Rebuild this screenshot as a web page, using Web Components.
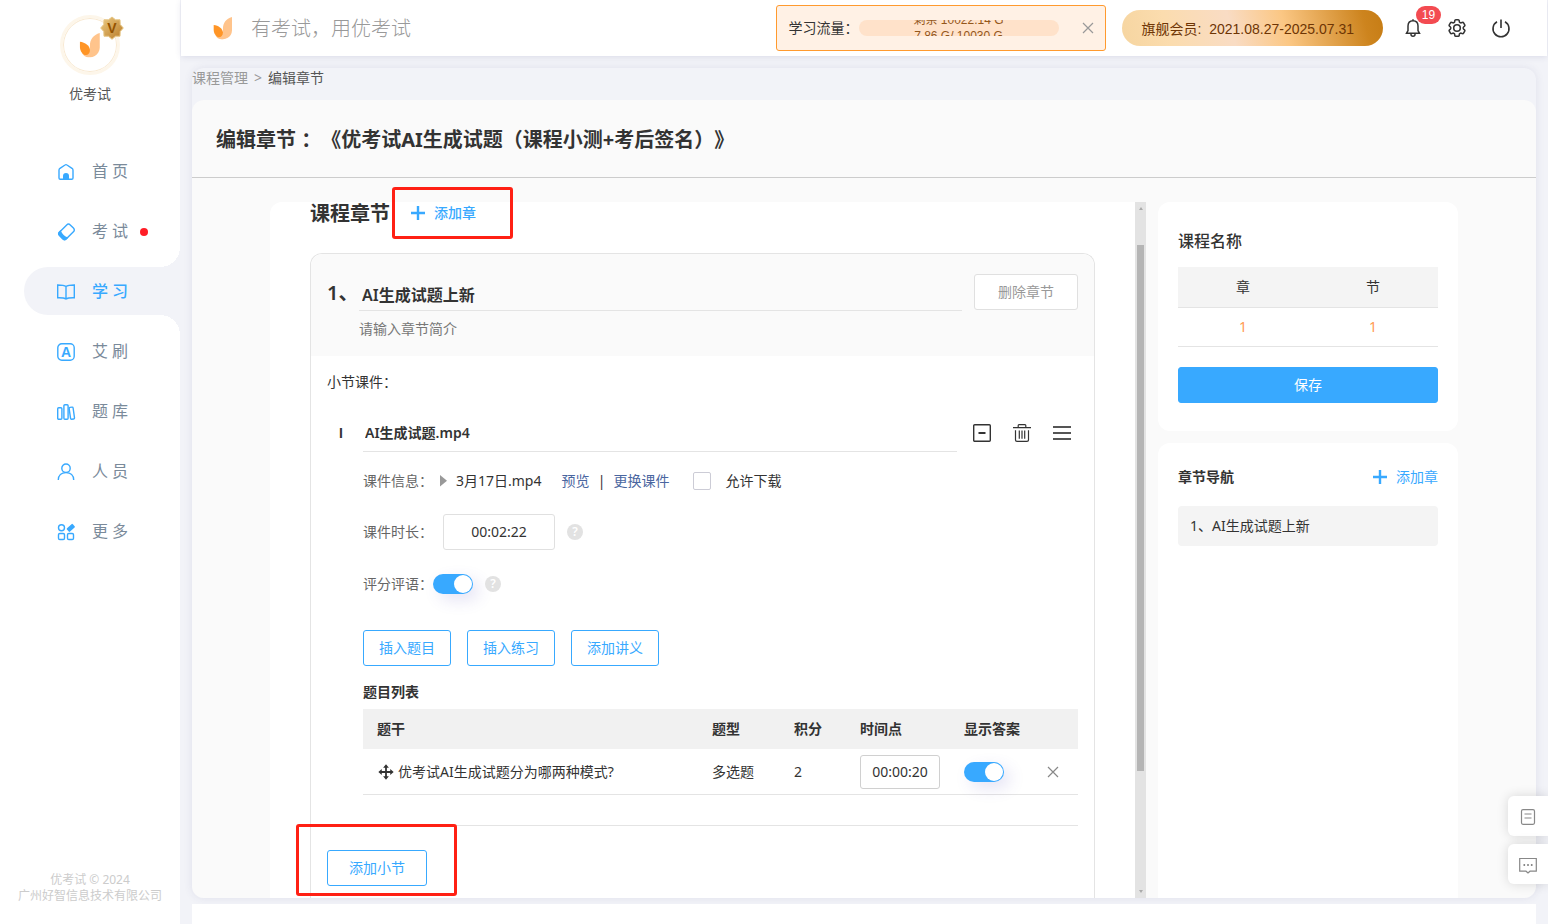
<!DOCTYPE html>
<html lang="zh-CN">
<head>
<meta charset="utf-8">
<meta name="viewport" content="width=device-width, initial-scale=1">
<title>优考试 - 编辑章节</title>
<style>
  :root {
    --blue: #38a9ff;
    --ink: #333;
    --muted: #666;
    --faint: #999;
    --line: #e4e4e4;
    --page: #f2f3f8;
    --panel: #fafafa;
    --sans: "Noto Sans", "Noto Sans CJK SC", sans-serif;
    --arial: "Liberation Sans", "Noto Sans CJK SC", sans-serif;
  }
  body {
    margin: 0;
    background: var(--page);
    color: var(--ink);
    font: 14px/20px var(--sans);
    text-spacing-trim: space-all;
  }
</style>
</head>
<body>
<app-shell>
  <side-bar slot="side"></side-bar>
  <top-bar slot="top"></top-bar>
  <course-page></course-page>
</app-shell>
<float-dock></float-dock>

<script>
const base = `:host, *, *::before, *::after { box-sizing: border-box; } :host([hidden]) { display: none; }
  button, input { font: inherit; color: inherit; margin: 0; } button { cursor: pointer; }
  svg { display: block; }`;

function define(name, css, html) {
  const template = document.createElement('template');
  template.innerHTML = `<style>${base}${css}</style>${html}`;
  customElements.define(name, class extends HTMLElement {
    constructor() {
      super();
      this.attachShadow({ mode: 'open' }).append(template.content.cloneNode(true));
    }
  });
}

/* ---------- icons ---------- */
const icons = {
  home: `<path d="M3 8.3Q3 7 4 6.3L9 3Q10 2.3 11 3L16 6.3Q17 7 17 8.3V16Q17 17.3 15.7 17.3H4.3Q3 17.3 3 16Z"/><path fill="currentColor" stroke="none" d="M7 17.5V14a3 3 0 0 1 6 0v3.500Z"/>`,
  exam: `<g transform="rotate(45 10 10)"><rect x="5.500" y="2" width="9.500" height="15" rx="2.500"/><path fill="currentColor" d="M5.500 13.500Q10 15.500 15 13.500V15q0 2-2.500 2H8q-2.500 0-2.500-2Z"/></g>`,
  book: `<path d="M10 4.500C8 3 5 3 1.700 3V15.700C5 15.700 8 15.500 10 17 12 15.500 15 15.700 18.300 15.700V3C15 3 12 3 10 4.500ZM10 4.500V17"/>`,
  shelf: `<rect x="1.700" y="5.700" width="4.200" height="11.500" rx="1"/><rect x="7.900" y="2.700" width="4.200" height="14.500" rx="1"/><rect x="13.800" y="5.200" width="4" height="12" rx="1" transform="rotate(-8 16 11)"/>`,
  person: `<circle cx="10" cy="6.200" r="4.200"/><path d="M2.300 18C2.300 13.500 5.500 10.600 10 10.600S17.700 13.500 17.700 18"/>`,
  more: `<circle cx="5.500" cy="5.800" r="3"/><rect x="2.500" y="11.500" width="6" height="6" rx="1.300"/><rect x="11.500" y="11.500" width="6" height="6" rx="1.300"/><rect fill="currentColor" stroke="none" x="10.800" y="3.600" width="8" height="4.600" rx="1" transform="rotate(-42 14.800 5.900)"/>`,
  ai: `<rect x="1.800" y="1.800" width="16.400" height="16.400" rx="4"/><text x="10" y="15" text-anchor="middle" font-family="Liberation Sans" font-weight="700" font-size="14" fill="currentColor" stroke="none">A</text>`,
  bell: `<path d="M10 2.700C6.800 2.700 5 5 5 8V12.500L3.500 15.300H16.500L15 12.500V8C15 5 13.200 2.700 10 2.700ZM10 2.700V1.200M8 16v.6a2 1.700 0 0 0 4 0V16"/>`,
  gear: `<g transform="translate(-1 -1) scale(.917)"><path d="M9.594 3.940c.09-.542.56-.94 1.110-.94h2.593c.55 0 1.020.398 1.110.94l.213 1.281c.063.374.313.686.645.87.074.04.147.083.22.127.325.196.72.257 1.075.124l1.217-.456a1.125 1.125 0 0 1 1.370.49l1.296 2.247a1.125 1.125 0 0 1-.26 1.431l-1.003.827c-.293.241-.438.613-.43.992a7.723 7.723 0 0 1 0 .255c-.008.378.137.75.43.991l1.004.827c.424.35.534.955.26 1.430l-1.298 2.247a1.125 1.125 0 0 1-1.369.491l-1.217-.456c-.355-.133-.75-.072-1.076.124a6.470 6.470 0 0 1-.22.128c-.331.183-.581.495-.644.869l-.213 1.281c-.09.543-.56.94-1.110.94h-2.594c-.55 0-1.019-.398-1.110-.94l-.213-1.281c-.062-.374-.312-.686-.644-.87a6.520 6.520 0 0 1-.22-.127c-.325-.196-.72-.257-1.076-.124l-1.217.456a1.125 1.125 0 0 1-1.369-.49l-1.297-2.247a1.125 1.125 0 0 1 .26-1.431l1.004-.827c.292-.24.437-.613.43-.991a6.932 6.932 0 0 1 0-.255c.007-.38-.138-.751-.43-.992l-1.004-.827a1.125 1.125 0 0 1-.26-1.430l1.297-2.247a1.125 1.125 0 0 1 1.370-.491l1.216.456c.356.133.751.072 1.076-.124.072-.044.146-.086.22-.128.332-.183.582-.495.644-.869l.214-1.280Z"/><circle cx="12" cy="12" r="3.600"/></g>`,
  power: `<path d="M6 3.800A8 8 0 1 0 14 3.800M10 1.500V10"/>`,
  close: `<path d="M5 5 15 15M15 5 5 15"/>`,
  plus: `<path stroke-width="2.400" d="M3 10H17M10 3V17"/>`,
  collapse: `<rect x="1.700" y="1.700" width="16.600" height="16.600" rx="1"/><path stroke-width="2" d="M6.500 10H13.500"/>`,
  trash: `<path d="M1 4.700H19M6.200 4.500V2.600Q6.200 1.700 7 1.700H13Q13.800 1.700 13.800 2.600V4.500M3.500 7.200V17Q3.500 18.400 5 18.400H15Q16.500 18.400 16.500 17V7.200M7.300 7.500V15.700M10 7.500V15.700M12.700 7.500V15.700"/>`,
  menu: `<path stroke="#555" stroke-width="1.800" d="M1 4H19M1 10H19M1 16H19"/>`,
  move: `<path stroke-width="2" d="M10 4V16M4 10H16"/><path fill="currentColor" stroke="none" d="M10 1.500 13.200 5.300H6.800ZM10 18.500 6.800 14.700H13.200ZM1.500 10 5.300 6.800V13.200ZM18.500 10 14.700 13.200V6.800Z"/>`,
  play: `<path fill="currentColor" stroke="none" d="M7 4 14 9.800 7 15.600Z"/>`,
  note: `<rect x="3.500" y="2.700" width="13" height="14.600" rx="1.500"/><path d="M6.500 7H13.500M6.500 11H13.500"/>`,
  chat: `<path d="M1.700 3.500H18.300V16.200H12L10 18 8 16.200H1.700Z"/><path stroke-width="1.800" d="M5.500 10h1.600M9.200 10h1.600M12.900 10h1.600"/>`,
};
customElements.define('ui-icon', class extends HTMLElement {
  constructor() { super(); this.attachShadow({ mode: 'open' }); }
  connectedCallback() {
    this.shadowRoot.innerHTML = `<style>${base}
      :host { display: block; width: 20px; height: 20px; flex: none; }
      svg { width: 100%; height: 100%; }</style>
      <svg viewBox="0 0 20 20" fill="none" stroke="currentColor" stroke-width="${this.getAttribute('weight') || 1.4}" aria-hidden="true">${icons[this.getAttribute('name')]}</svg>`;
  }
});

define('brand-mark', `:host { display: block; width: 20px; height: 24px; } svg { width: 100%; height: 100%; }`,
  `<svg viewBox="0 0 20 24" aria-hidden="true">
    <path fill="#ffc48c" d="M19 1V14.500A9 9 0 0 1 5.500 22C9.500 21 10.500 18 10 14.500 9.400 7.500 12.500 3 19 1Z"/>
    <path fill="#ffc48c" d="M2.500 19C4 23.500 9 24.500 13 22L11 15Z"/>
    <path fill="#ff9526" d="M.7 9C5.500 9.500 9.700 12.500 9.900 16.500 10 20 7.500 21.700 5 21.200 2 19.500.7 16.500.7 14Z"/>
  </svg>`);

/* ---------- shared controls ---------- */
define('ui-button', `
  :host { display: block; }
  button { display: block; width: 100%; height: 36px; padding: 0; border: 1px solid var(--blue); border-radius: 3px; background: #fff; color: var(--blue); }
  :host([tone="plain"]) button { border-color: #e0e0e0; color: var(--faint); }
  :host([tone="solid"]) button { background: var(--blue); color: #fff; }`,
  `<button type="button"><slot></slot></button>`);

define('add-link', `
  :host { display: block; }
  button { display: flex; align-items: center; gap: 6px; height: 20px; padding: 0; border: 0; background: none; color: var(--blue); line-height: 20px; }`,
  `<button type="button"><ui-icon name="plus"></ui-icon><slot></slot></button>`);

define('ui-switch', `
  :host { display: block; }
  label { display: flex; align-items: center; height: 20px; color: var(--muted); }
  input { appearance: none; display: block; width: 40px; height: 20px; padding: 1px; border-radius: 10px; background: var(--blue); box-shadow: 6px 6px 16px rgba(80, 70, 180, .15); }
  input::before { content: ""; display: block; width: 18px; height: 18px; border-radius: 9px; background: #fff; }
  input:checked::before { margin-left: 20px; }`,
  `<label><slot></slot><input type="checkbox" role="switch" aria-label="开关" checked></label>`);

define('help-dot', `
  :host { display: block; width: 16px; height: 16px; border-radius: 8px; background: #e2e2e2; color: #fff; font: 600 12px/16px var(--sans); text-align: center; }`,
  `?`);

define('marker-box', `
  :host { position: absolute; border: 3px solid #ff2014; border-radius: 3px; pointer-events: none; }`, ``);

/* ---------- sidebar ---------- */
define('nav-item', `
  :host { display: block; position: relative; }
  a { display: flex; align-items: center; gap: 16px; height: 48px; padding-left: 32px; border-radius: 24px 0 0 24px; color: #7a8a9a; font-size: 16px; line-height: 24px; text-decoration: none; }
  ::slotted(ui-icon) { margin-top: 2px; }
  span { letter-spacing: 4px; }
  i { display: none; width: 8px; height: 8px; margin: 2px 0 0 -8px; border-radius: 4px; background: #ff1d26; }
  :host([dot]) i { display: block; }
  :host([active]) a { background: var(--page); color: var(--blue); font-weight: 500; }
  :host([active])::before, :host([active])::after { content: ""; position: absolute; right: 0; width: 20px; height: 20px; }
  :host([active])::before { bottom: 100%; background: radial-gradient(circle at 0 0, transparent 20px, var(--page) 20px); }
  :host([active])::after { top: 100%; background: radial-gradient(circle at 0 100%, transparent 20px, var(--page) 20px); }`,
  `<a href="#"><slot name="icon"></slot><span><slot></slot></span><i></i></a>`);

define('side-bar', `
  :host { display: flex; flex-direction: column; padding: 15px 0 20px; background: #fff; }
  .avatar { position: relative; display: grid; place-items: center; width: 60px; height: 60px; margin: 0 auto; border: 3px solid #fdf6ea; border-radius: 30px; box-shadow: inset 0 0 0 1px #f8e9d2; }
  .avatar brand-mark { width: 22px; height: 26px; }
  .badge { position: absolute; top: -3px; right: -8px; width: 26px; height: 26px; }
  .name { margin: 9px 0 43px; color: #555; text-align: center; }
  nav { display: grid; gap: 12px; padding-left: 24px; }
  ui-icon { color: var(--blue); }
  footer { margin-top: auto; color: #ccc; font-size: 12px; line-height: 16px; text-align: center; }`,
  `<div class="avatar"><brand-mark></brand-mark>
    <svg class="badge" viewBox="0 0 26 26" aria-hidden="true">
      <defs><linearGradient id="g" x1="0" y1="0" x2="1" y2="1"><stop offset="0" stop-color="#eccb85"/><stop offset="1" stop-color="#b97a25"/></linearGradient></defs>
      <path fill="url(#g)" stroke="#e6c583" d="M13 2 16.500 4.800 21 4.800 21.200 9.500 24.300 13 21.200 16.500 21 21.200 16.500 21.200 13 24.300 9.500 21.200 5 21.200 4.800 16.500 1.700 13 4.800 9.500 5 4.800 9.500 4.800Z"/>
      <text x="13" y="18" text-anchor="middle" font-family="Liberation Sans" font-weight="700" font-size="14" fill="#945300">V</text>
    </svg>
  </div>
  <div class="name">优考试</div>
  <nav aria-label="主导航">
    <nav-item><ui-icon slot="icon" name="home"></ui-icon>首页</nav-item>
    <nav-item dot><ui-icon slot="icon" name="exam"></ui-icon>考试</nav-item>
    <nav-item active><ui-icon slot="icon" name="book"></ui-icon>学习</nav-item>
    <nav-item><ui-icon slot="icon" name="ai"></ui-icon>艾刷</nav-item>
    <nav-item><ui-icon slot="icon" name="shelf"></ui-icon>题库</nav-item>
    <nav-item><ui-icon slot="icon" name="person"></ui-icon>人员</nav-item>
    <nav-item><ui-icon slot="icon" name="more"></ui-icon>更多</nav-item>
  </nav>
  <footer>优考试 © 2024<br>广州好智信息技术有限公司</footer>`);

/* ---------- top bar ---------- */
define('traffic-meter', `
  :host { display: flex; align-items: center; width: 330px; height: 46px; padding: 0 7px 0 12px; border: 1px solid #ff9a2e; border-radius: 3px; background: #fff1e5; }
  .bar { width: 200px; height: 16px; border-radius: 8px; overflow: hidden; display: grid; align-content: center; background: #ffe2ca; color: #94571a; font: 12px/16px var(--arial); text-align: center; }
  button { margin-left: auto; padding: 0; border: 0; background: none; color: #999; }`,
  `<span>学习流量：</span>
   <div class="bar"><span>剩余 10022.14 G</span><span>7.86 G/ 10030 G</span></div>
   <button type="button" aria-label="关闭"><ui-icon name="close" weight="1.2"></ui-icon></button>`);

define('top-bar', `
  :host { display: flex; align-items: center; height: 56px; margin: 0 1px; padding: 0 36px 0 32px; background: #fff; box-shadow: 0 1px 6px rgba(60, 60, 120, .12); }
  .slogan { margin: 2px auto 0 18px; color: var(--faint); font-size: 20px; line-height: 28px; font-weight: 300; }
  .member { height: 36px; margin: 0 20px 0 16px; padding: 0 29px 0 20px; border-radius: 18px; background: linear-gradient(75deg, #f6d5a0, #fbdcae 18%, #f9dcc4 42%, #fbc784 62%, #cd841e 92%, #c67c14); color: #6e3504; font: 14px/38px var(--arial); white-space: pre; }
  .tools { display: flex; gap: 24px; color: #333; }
  button { position: relative; padding: 0; border: 0; background: none; color: inherit; }
  .count { position: absolute; left: 13px; top: -12px; width: 25px; height: 18px; border-radius: 9px; background: #f34b51; color: #fff; font: 12px/18px var(--arial); }`,
  `<brand-mark></brand-mark><div class="slogan">有考试，用优考试</div>
   <traffic-meter></traffic-meter>
   <div class="member">旗舰会员:  2021.08.27-2025.07.31</div>
   <div class="tools">
     <button type="button" aria-label="通知"><ui-icon name="bell" weight="1.5"></ui-icon><span class="count">19</span></button>
     <button type="button" aria-label="设置"><ui-icon name="gear" weight="1.7"></ui-icon></button>
     <button type="button" aria-label="退出"><ui-icon name="power" weight="1.6"></ui-icon></button>
   </div>`);

/* ---------- editor ---------- */
define('question-table', `
  :host { display: block; }
  table { width: 100%; border-collapse: separate; border-spacing: 0; table-layout: fixed; }
  caption { padding-bottom: 7px; font-weight: 600; text-align: left; }
  th, td { padding: 0 0 0 14px; text-align: left; }
  th { height: 40px; background: #f1f1f1; font-weight: 600; }
  td { height: 46px; border-bottom: 1px solid var(--line); }
  .kind { width: 82px; } .score { width: 66px; } .time { width: 104px; } .answer { width: 82px; } .act { width: 46px; }
  .stem { display: flex; align-items: center; gap: 3px; }
  .stem ui-icon { width: 18px; height: 18px; }
  .time-box { display: block; width: 80px; height: 34px; padding: 0; border: 1px solid #d0d0d0; border-radius: 3px; text-align: center; }
  button { display: block; padding: 0; border: 0; background: none; color: #888; }
  td:last-child { padding-left: 11px; }`,
  `<table><caption>题目列表</caption>
    <thead><tr><th>题干</th><th class="kind">题型</th><th class="score">积分</th><th class="time">时间点</th><th class="answer">显示答案</th><th class="act"></th></tr></thead>
    <tbody><tr>
      <td><div class="stem"><ui-icon name="move"></ui-icon>优考试AI生成试题分为哪两种模式?</div></td>
      <td>多选题</td><td>2</td>
      <td><input class="time-box" aria-label="时间点" value="00:00:20"></td>
      <td><ui-switch></ui-switch></td>
      <td><button type="button" aria-label="删除题目"><ui-icon name="close" weight="1.2"></ui-icon></button></td>
    </tr></tbody></table>`);

define('lesson-editor', `
  :host { display: block; padding-left: 36px; }
  .head { display: flex; align-items: center; margin-left: -36px; padding-right: 6px; }
  .index { width: 36px; padding: 0 0 2px 12px; font-family: var(--arial); font-weight: 700; }
  .title { flex: 1; min-width: 0; height: 37px; margin-right: 15px; padding: 0 2px 2px; border: 0; border-bottom: 1px solid var(--line); background: none; font-weight: 600; }
  .tools { display: flex; gap: 20px; padding-bottom: 1px; }
  .tools button { padding: 0; border: 0; background: none; }
  .row { display: flex; align-items: center; }
  .row > label:first-child, .row > .key { color: var(--muted); width: 70px; }
  .info { margin-top: 19px; }
  .info a { color: #4a66a0; text-decoration: none; }
  .file { display: flex; align-items: center; margin-right: 20px; }
  .file ui-icon { margin-right: 3px; color: #999; }
  .bar { width: 24px; text-align: center; }
  .allow { display: flex; align-items: center; gap: 14px; margin-left: 24px; }
  .allow input { appearance: none; width: 18px; height: 18px; border: 1px solid #ccccd6; border-radius: 2px; background: #fff; }
  .length { margin-top: 23px; }
  .length input { width: 112px; height: 36px; margin: 0 12px 0 10px; padding: 0 0 2px; border: 1px solid #e0e0e0; border-radius: 3px; text-align: center; }
  .remark { margin-top: 24px; gap: 12px; }
  .acts { gap: 16px; margin: 36px 0 16px; }
  .acts ui-button { width: 88px; }
  .end { height: 0; margin-top: 30px; border-top: 1px solid var(--line); }`,
  `<div class="head"><span class="index">I</span>
     <input class="title" aria-label="小节名称" value="AI生成试题.mp4">
     <div class="tools">
       <button type="button" aria-label="收起"><ui-icon name="collapse"></ui-icon></button>
       <button type="button" aria-label="删除"><ui-icon name="trash" weight="1.2"></ui-icon></button>
       <button type="button" aria-label="排序"><ui-icon name="menu"></ui-icon></button>
     </div></div>
   <div class="row info"><span class="key">课件信息：</span>
     <span class="file"><ui-icon name="play"></ui-icon>3月17日.mp4</span>
     <a href="#">预览</a><span class="bar">|</span><a href="#">更换课件</a>
     <label class="allow"><input type="checkbox">允许下载</label></div>
   <div class="row length"><label for="len">课件时长：</label><input id="len" value="00:02:22"><help-dot></help-dot></div>
   <div class="row remark"><ui-switch>评分评语：</ui-switch><help-dot></help-dot></div>
   <div class="row acts"><ui-button>插入题目</ui-button><ui-button>插入练习</ui-button><ui-button>添加讲义</ui-button></div>
   <question-table></question-table>
   <div class="end"></div>`);

define('chapter-card', `
  :host { display: flex; flex-direction: column; flex: 1; border: 1px solid var(--line); border-bottom: 0; border-radius: 12px 12px 0 0; }
  header { display: grid; grid-template-columns: 32px 1fr 104px; padding: 20px 16px 17px; border-radius: 12px 12px 0 0; background: var(--panel); }
  .no { font-size: 20px; line-height: 37px; font-weight: 600; white-space: nowrap; }
  .title { height: 37px; min-width: 0; margin-right: 12px; padding: 3px 3px 0; border: 0; border-bottom: 1px solid var(--line); background: none; font-size: 16px; font-weight: 600; }
  .intro { grid-column: 2 / 4; height: 20px; margin-top: 8px; padding: 0; border: 0; background: none; }
  .intro::placeholder { color: #777; opacity: 1; }
  .body { padding: 16px 16px 12px; }
  .body > p { margin: 0 0 23px; }
  .foot { position: relative; width: 100px; margin-top: 24px; }
  marker-box { left: -31px; top: -26px; width: 161px; height: 72px; }`,
  `<header><span class="no">1、</span>
     <input class="title" aria-label="章节名称" value="AI生成试题上新">
     <ui-button tone="plain">删除章节</ui-button>
     <input class="intro" aria-label="章节简介" placeholder="请输入章节简介"></header>
   <div class="body"><p>小节课件：</p>
     <lesson-editor></lesson-editor>
     <div class="foot"><ui-button>添加小节</ui-button><marker-box></marker-box></div></div>`);

define('scroll-rail', `
  :host { display: flex; flex-direction: column; align-items: center; justify-content: space-between; width: 11px; background: #e3e3e3; padding: 5px 0; }
  .up, .down { border: 2px solid transparent; }
  .up { border-bottom: 3px solid #aaa; border-top: 0; } .down { border-top: 3px solid #aaa; border-bottom: 0; }
  .run { flex: 1; display: flex; flex-direction: column; width: 7px; }
  .run::before { content: ""; flex: 35; } .run i { flex: 526; background: #b5b5b5; } .run::after { content: ""; flex: 119; }`,
  `<span class="up"></span><span class="run"><i></i></span><span class="down"></span>`);

define('chapter-editor', `
  :host { display: flex; flex: 1; min-width: 0; background: #fff; border-radius: 12px 0 0 0; }
  .content { display: flex; flex-direction: column; flex: 1; min-width: 0; padding: 0 40px; }
  .title { display: flex; align-items: center; height: 22px; margin-bottom: 29px; }
  h2 { margin: 0; padding-top: 2px; font-size: 20px; line-height: 22px; font-weight: 700; }
  .add { position: relative; padding-left: 18px; font-weight: 500; }
  marker-box { left: 2px; top: -16px; width: 121px; height: 52px; }`,
  `<div class="content"><div class="title"><h2>课程章节</h2><div class="add"><add-link>添加章</add-link><marker-box></marker-box></div></div>
   <chapter-card></chapter-card></div><scroll-rail></scroll-rail>`);

/* ---------- right column ---------- */
define('summary-card', `
  :host { display: block; padding: 28px 20px; background: #fff; border-radius: 12px; }
  h3 { margin: 0 0 15px; font-size: 16px; line-height: 22px; font-weight: 500; }
  table { width: 100%; margin-bottom: 20px; border-collapse: separate; border-spacing: 0; table-layout: fixed; text-align: center; }
  th, td { padding: 0; border-bottom: 1px solid var(--line); font-weight: 400; }
  th { height: 41px; background: #f4f4f4; }
  td { height: 39px; color: #ff9a52; }`,
  `<h3>课程名称</h3><table><thead><tr><th>章</th><th>节</th></tr></thead><tbody><tr><td>1</td><td>1</td></tr></tbody></table>
   <ui-button tone="solid">保存</ui-button>`);

define('outline-card', `
  :host { display: block; flex: 1; padding: 24px 20px; background: #fff; border-radius: 12px 12px 0 0; }
  div { display: flex; justify-content: space-between; align-items: center; margin-bottom: 19px; }
  h3 { margin: 0; font-size: 14px; line-height: 20px; font-weight: 600; }
  a { display: block; padding: 10px 12px; border-radius: 4px; background: #f4f4f4; color: var(--ink); text-decoration: none; }`,
  `<div><h3>章节导航</h3><add-link>添加章</add-link></div><a href="#">1、AI生成试题上新</a>`);

/* ---------- page ---------- */
define('course-page', `
  :host { display: flex; flex-direction: column; flex: 1; padding: 12px 12px 0; }
  .sheet { display: flex; flex-direction: column; flex: 1; border-radius: 12px; box-shadow: 0 0 8px rgba(60, 60, 120, .1); }
  .crumbs { display: flex; gap: 6px; height: 32px; color: var(--faint); }
  .crumbs a { color: inherit; text-decoration: none; } .crumbs b { color: #555; font-weight: 400; }
  .panel { display: flex; flex-direction: column; flex: 1; border-radius: 12px; background: var(--panel); }
  h1 { margin: 0; padding: 26px 24px 23px; border-bottom: 1px solid #ccc; font-size: 20px; line-height: 28px; font-weight: 700; }
  .cols { display: flex; flex: 1; gap: 12px; width: 100%; max-width: 1188px; margin: 0 auto; padding-top: 24px; }
  aside { display: flex; flex-direction: column; gap: 12px; width: 300px; }
  .tail { height: 20px; margin-top: 6px; background: #fff; }`,
  `<div class="sheet"><nav class="crumbs" aria-label="面包屑"><a href="#">课程管理</a><span>&gt;</span><b>编辑章节</b></nav>
   <main class="panel"><h1>编辑章节 ：《优考试AI生成试题（课程小测+考后签名）》</h1>
     <div class="cols"><chapter-editor></chapter-editor><aside><summary-card></summary-card><outline-card></outline-card></aside></div>
   </main></div><div class="tail"></div>`);

define('float-dock', `
  :host { position: fixed; right: 0; bottom: 40px; display: grid; gap: 8px; }
  button { display: grid; place-items: center; width: 40px; height: 40px; padding: 2px 0 0; border: 0; border-radius: 6px 0 0 6px; background: #fff; color: #888; box-shadow: 0 0 12px rgba(0, 0, 0, .14); }`,
  `<button type="button" aria-label="文档"><ui-icon name="note" weight="1.2"></ui-icon></button>
   <button type="button" aria-label="反馈"><ui-icon name="chat" weight="1.2"></ui-icon></button>`);

define('app-shell', `
  :host { display: grid; grid-template-columns: 180px minmax(0, 1fr); min-height: 100vh; }
  .main { display: flex; flex-direction: column; }`,
  `<slot name="side"></slot><div class="main"><slot name="top"></slot><slot></slot></div>`);
</script>
</body>
</html>
